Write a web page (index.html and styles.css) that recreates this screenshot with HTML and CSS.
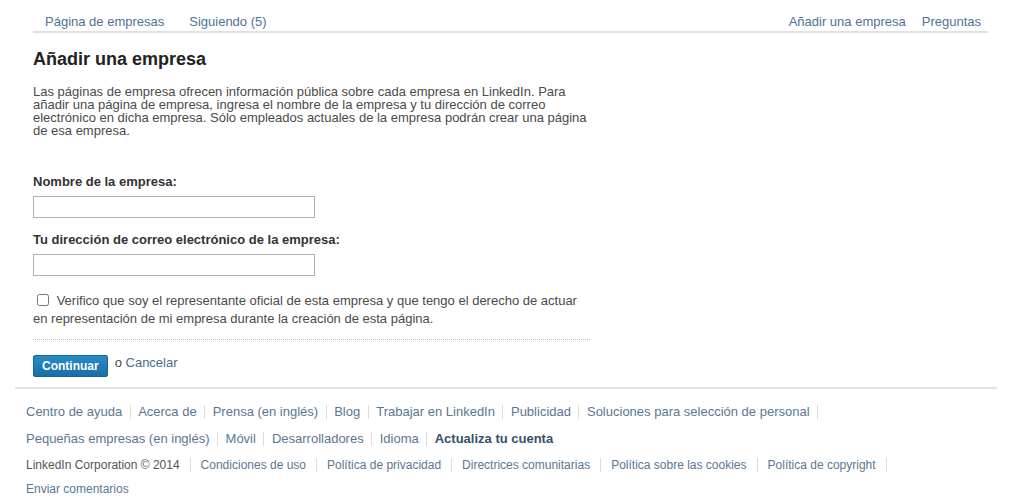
FILE: index.html
```html
<!DOCTYPE html>
<html lang="es">
<head>
<meta charset="utf-8">
<title>Añadir una empresa</title>
<link rel="stylesheet" href="styles.css">
</head>
<body>
<div class="page">
  <nav class="tabs">
    <div class="tabs-left">
      <a href="#">Página de empresas</a>
      <a href="#">Siguiendo (5)</a>
    </div>
    <div class="tabs-right">
      <a href="#">Añadir una empresa</a>
      <a href="#">Preguntas</a>
    </div>
  </nav>

  <main class="content">
    <h1>Añadir una empresa</h1>
    <p class="intro">Las páginas de empresa ofrecen información pública sobre cada empresa en LinkedIn. Para añadir una página de empresa, ingresa el nombre de la empresa y tu dirección de correo electrónico en dicha empresa. Sólo empleados actuales de la empresa podrán crear una página de esa empresa.</p>

    <form class="form">
      <div class="field">
        <label for="name">Nombre de la empresa:</label>
        <input id="name" type="text">
      </div>
      <div class="field">
        <label for="email">Tu dirección de correo electrónico de la empresa:</label>
        <input id="email" type="text">
      </div>
      <div class="verify">
        <input type="checkbox" id="v"> <label for="v">Verifico que soy el representante oficial de esta empresa y que tengo el derecho de actuar en representación de mi empresa durante la creación de esta página.</label>
      </div>
      <div class="actions">
        <button type="button" class="btn">Continuar</button>
        <span class="or">o <a href="#">Cancelar</a></span>
      </div>
    </form>
  </main>

  <footer class="footer">
    <ul class="row r1">
      <li><a href="#">Centro de ayuda</a></li>
      <li><a href="#">Acerca de</a></li>
      <li><a href="#">Prensa (en inglés)</a></li>
      <li><a href="#">Blog</a></li>
      <li><a href="#">Trabajar en LinkedIn</a></li>
      <li><a href="#">Publicidad</a></li>
      <li><a href="#">Soluciones para selección de personal</a></li>
    </ul>
    <ul class="row r2">
      <li><a href="#">Pequeñas empresas (en inglés)</a></li>
      <li><a href="#">Móvil</a></li>
      <li><a href="#">Desarrolladores</a></li>
      <li><a href="#">Idioma</a></li>
      <li class="last"><a href="#" class="strong">Actualiza tu cuenta</a></li>
    </ul>
    <ul class="row small r3">
      <li><span>LinkedIn Corporation © 2014</span></li>
      <li><a href="#">Condiciones de uso</a></li>
      <li><a href="#">Política de privacidad</a></li>
      <li><a href="#">Directrices comunitarias</a></li>
      <li><a href="#">Política sobre las cookies</a></li>
      <li><a href="#">Política de copyright</a></li>
    </ul>
    <ul class="row small r4">
      <li class="last"><a href="#">Enviar comentarios</a></li>
    </ul>
  </footer>
</div>
</body>
</html>
```

FILE: styles.css
```css
* { box-sizing: border-box; }
html, body { margin: 0; padding: 0; background: #fff; }
body {
  font-family: "Liberation Sans", Arial, sans-serif;
  font-size: 13px;
  color: #333;
}
a { text-decoration: none; color: #4a6b8c; }

.page { padding: 0 29px 0 15px; }

.tabs {
  margin: 0 7px 0 18px;
  display: flex;
  justify-content: space-between;
  border-bottom: 2px solid #e1e1e1;
  height: 33px;
  padding-top: 14px;
  font-size: 13px;
  line-height: 15px;
}
.tabs a { color: #4f7197; }
.tabs-left { display: flex; gap: 25px; padding-left: 12px; }
.tabs-right { display: flex; gap: 16px; padding-right: 7px; }

.content { padding: 0 0 10px 18px; }
h1 {
  margin: 15px 0 0;
  font-size: 18px;
  font-weight: bold;
  color: #222;
  line-height: 22px;
}
.intro {
  margin: 15px 0 0;
  width: 558px;
  line-height: 13px;
  color: #4a4a4a;
}

.form { margin-top: 37px; }
.field { margin-bottom: 14px; }
.field label {
  display: block;
  font-weight: bold;
  color: #333;
  line-height: 16px;
  margin-bottom: 6px;
}
.field input {
  display: block;
  width: 282px;
  height: 22px;
  border: 1px solid #b0b0b0;
  margin: 0;
  padding: 2px 4px;
}
.field + .field { margin-top: 1px; }

.verify {
  width: 557px;
  line-height: 18px;
  color: #4a4a4a;
  padding-top: 2px;
  padding-bottom: 11px;
  border-bottom: 1px dotted #bbb;
}
.verify input { margin: 0 4px 0 4px; width: 12px; height: 12px; vertical-align: -1px; }

.actions { display: flex; align-items: flex-start; gap: 7px; padding-top: 15px; }
.btn {
  font-family: inherit;
  font-weight: bold;
  font-size: 12px;
  color: #fff;
  background: linear-gradient(#2a8bc6, #1a6ea6);
  border: 1px solid #156596;
  border-radius: 2px;
  padding: 0 8px;
  height: 22px;
  line-height: 20px;
  margin-top: 0;
}
.or { color: #4a4a4a; line-height: 15px; }
.or a { color: #4a6b8c; }

.footer {
  border-top: 2px solid #e4e4e4;
  padding: 10px 0 0 11px;
  margin-right: -2px;
}
.row {
  list-style: none;
  margin: 0;
  padding: 0;
  display: flex;
  flex-wrap: wrap;
}
.row li { padding: 0 7.5px; border-right: 1px solid #ddd; line-height: 14px; margin: 6px 0 7px; }
.row.r2 li { margin: 6px 0 6px; }
.row.r3 li { margin: 6px 0 4px; }
.row.r4 li { margin: 6px 0 4px; }
.row li:first-child { padding-left: 0; }
.row li.last { border-right: none; }
.row a { color: #5a7793; }
.row a.strong { color: #33506e; font-weight: bold; }
.row.small { font-size: 12px; }
.row.small li { padding: 0 10px; }
.row.small li:first-child { padding-left: 0; }
.row.small span { color: #555; }
```
